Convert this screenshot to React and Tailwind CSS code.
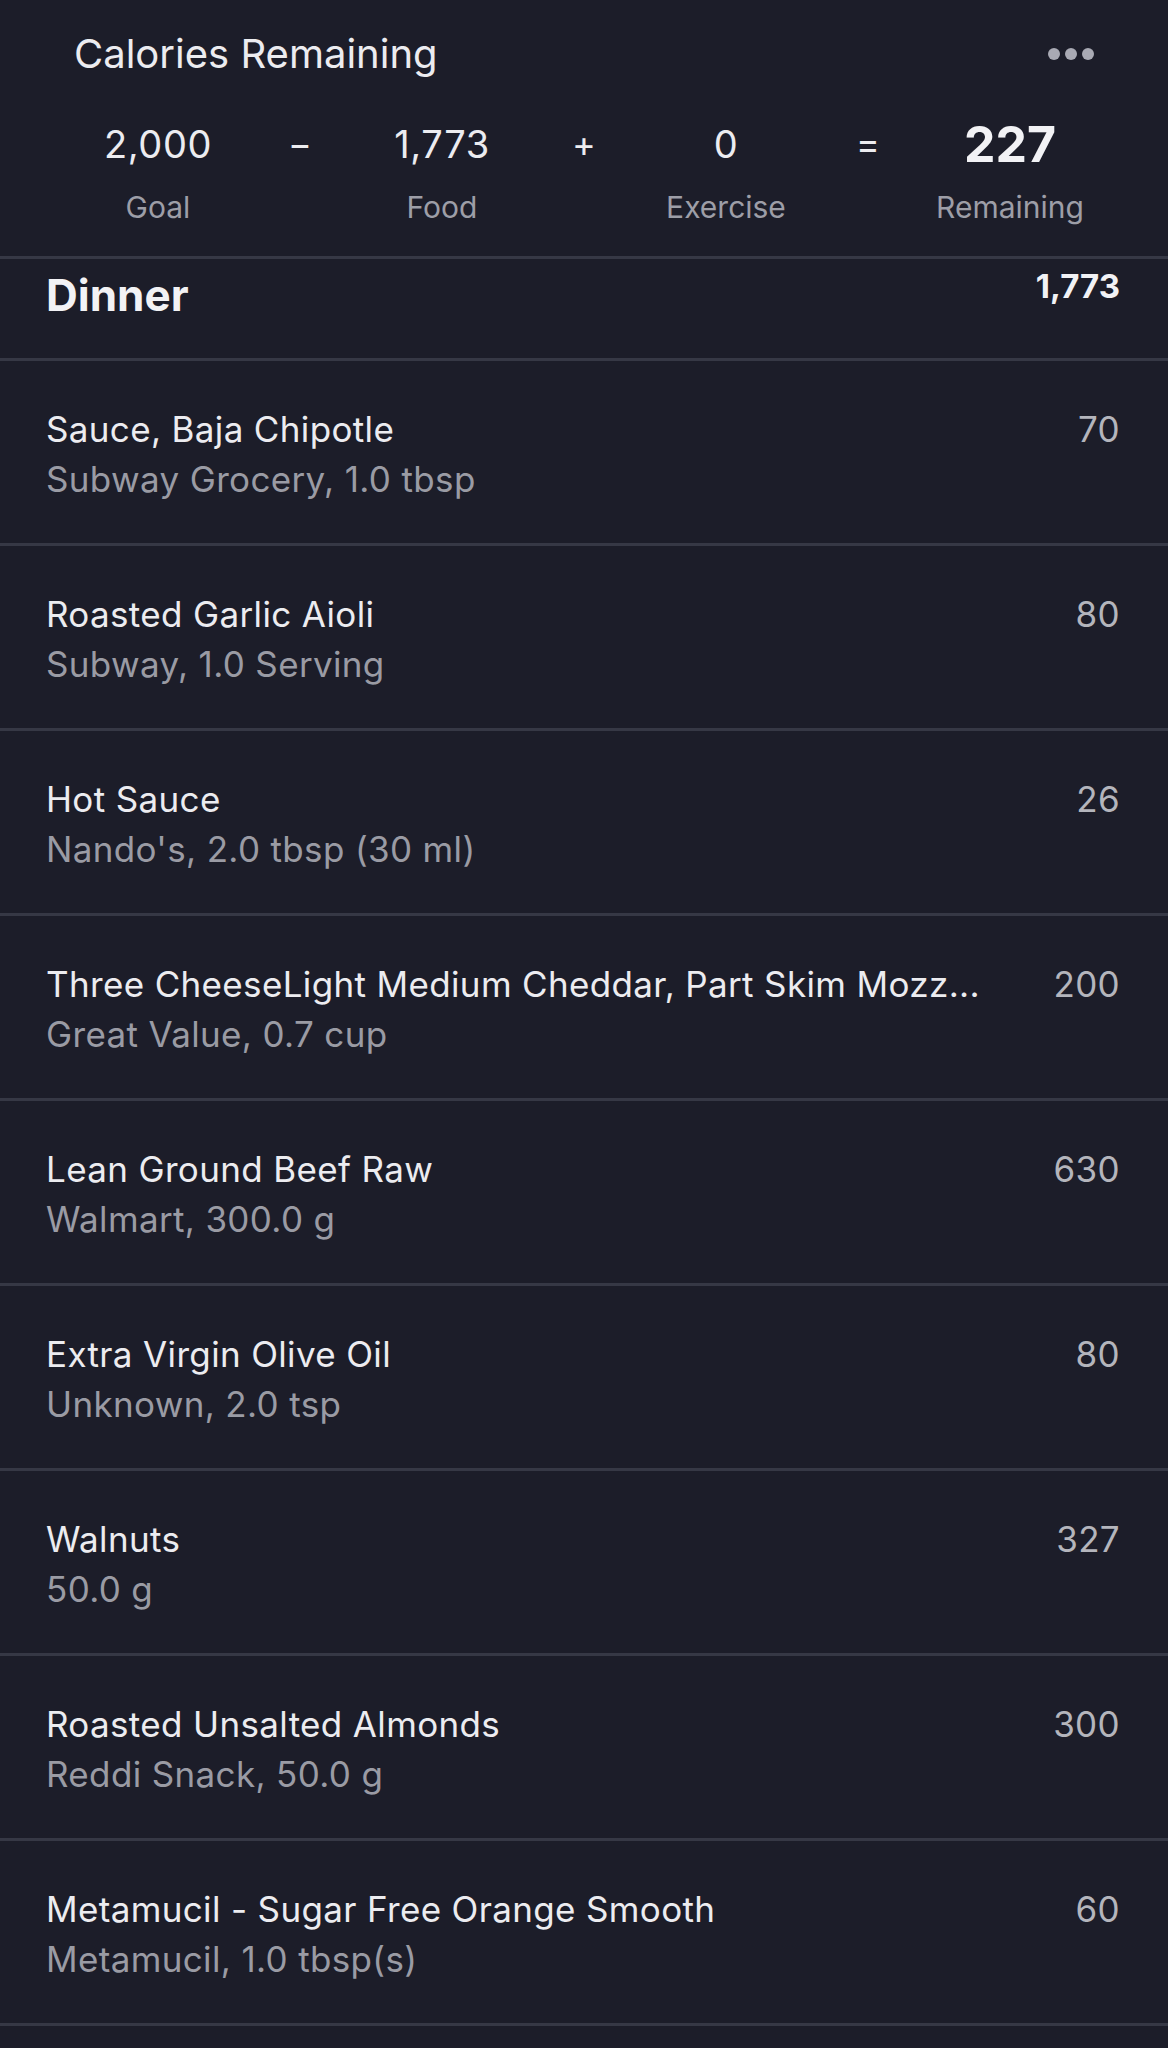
import React from "react";

const summary = [
  { value: "2,000", label: "Goal" },
  { value: "1,773", label: "Food" },
  { value: "0", label: "Exercise" },
  { value: "227", label: "Remaining", bold: true },
];

const operators = ["−", "+", "="];

const foods = [
  { name: "Sauce, Baja Chipotle", detail: "Subway Grocery, 1.0 tbsp", cal: 70 },
  { name: "Roasted Garlic Aioli", detail: "Subway, 1.0 Serving", cal: 80 },
  { name: "Hot Sauce", detail: "Nando's, 2.0 tbsp (30 ml)", cal: 26 },
  {
    name: "Three CheeseLight Medium Cheddar, Part Skim Mozz...",
    detail: "Great Value, 0.7 cup",
    cal: 200,
  },
  { name: "Lean Ground Beef Raw", detail: "Walmart, 300.0 g", cal: 630 },
  { name: "Extra Virgin Olive Oil", detail: "Unknown, 2.0 tsp", cal: 80 },
  { name: "Walnuts", detail: "50.0 g", cal: 327 },
  { name: "Roasted Unsalted Almonds", detail: "Reddi Snack, 50.0 g", cal: 300 },
  {
    name: "Metamucil - Sugar Free Orange Smooth",
    detail: "Metamucil, 1.0 tbsp(s)",
    cal: 60,
  },
];

const SummaryColumn = ({ value, label, bold }) => (
  <div className="flex w-[168px] flex-col items-center">
    <div className="flex h-[50px] items-center">
      <span
        className={
          bold
            ? "text-[50px] font-bold leading-none text-[#f2f2f5]"
            : "text-[38px] leading-none tracking-[0.6px] text-[#ececf0]"
        }
      >
        {value}
      </span>
    </div>
    <span className="mt-[23px] text-[30px] leading-none text-[#9d9ea7]">
      {label}
    </span>
  </div>
);

const FoodRow = ({ item }) => (
  <div className="flex items-start justify-between border-t-[3px] border-[#363845] pl-[46px] pr-[48px] pt-[43px] pb-[39px]">
    <div className="min-w-0 flex-1 pr-[60px]">
      <p className="whitespace-nowrap text-[35px] leading-[50px] tracking-[0.35px] text-[#ececf0]">
        {item.name}
      </p>
      <p className="whitespace-nowrap text-[35px] leading-[50px] tracking-[0.35px] text-[#9a9ba4]">
        {item.detail}
      </p>
    </div>
    <span className="text-[35px] leading-[50px] tracking-[0.35px] text-[#b4b5bc]">
      {item.cal}
    </span>
  </div>
);

export default function App() {
  return (
    <div
      className="min-h-screen w-full bg-[#1c1d29]"
      style={{ fontFamily: "Inter, 'Noto Sans', sans-serif" }}
    >
      {/* calories remaining summary */}
      <div className="h-[256px] px-[74px] pt-[34px]">
        <div className="flex items-center justify-between">
          <h1 className="text-[40px] font-normal leading-none text-[#ececf0]">
            Calories Remaining
          </h1>
          <div className="flex gap-[5px]">
            <span className="h-[12px] w-[12px] rounded-full bg-[#a9aab4]" />
            <span className="h-[12px] w-[12px] rounded-full bg-[#a9aab4]" />
            <span className="h-[12px] w-[12px] rounded-full bg-[#a9aab4]" />
          </div>
        </div>

        <div className="mt-[45px] flex items-start">
          {summary.map((col, i) => (
            <React.Fragment key={col.label}>
              <SummaryColumn {...col} />
              {i < operators.length && (
                <div className="flex h-[50px] w-[116px] items-center justify-center text-[36px] leading-none text-[#ececf0]">
                  {operators[i]}
                </div>
              )}
            </React.Fragment>
          ))}
        </div>
      </div>

      {/* meal header */}
      <div className="flex h-[102px] items-start justify-between border-t-[3px] border-[#363845] pl-[46px] pr-[48px] pt-[11px]">
        <h2 className="mt-[3px] text-[44px] font-bold leading-none text-[#f2f2f5]">
          Dinner
        </h2>
        <span className="text-[33px] font-bold leading-none text-[#f2f2f5]">
          1,773
        </span>
      </div>

      {foods.map((item) => (
        <FoodRow key={item.name} item={item} />
      ))}
      <div className="h-[40px] border-t-[3px] border-[#363845]" />
    </div>
  );
}
